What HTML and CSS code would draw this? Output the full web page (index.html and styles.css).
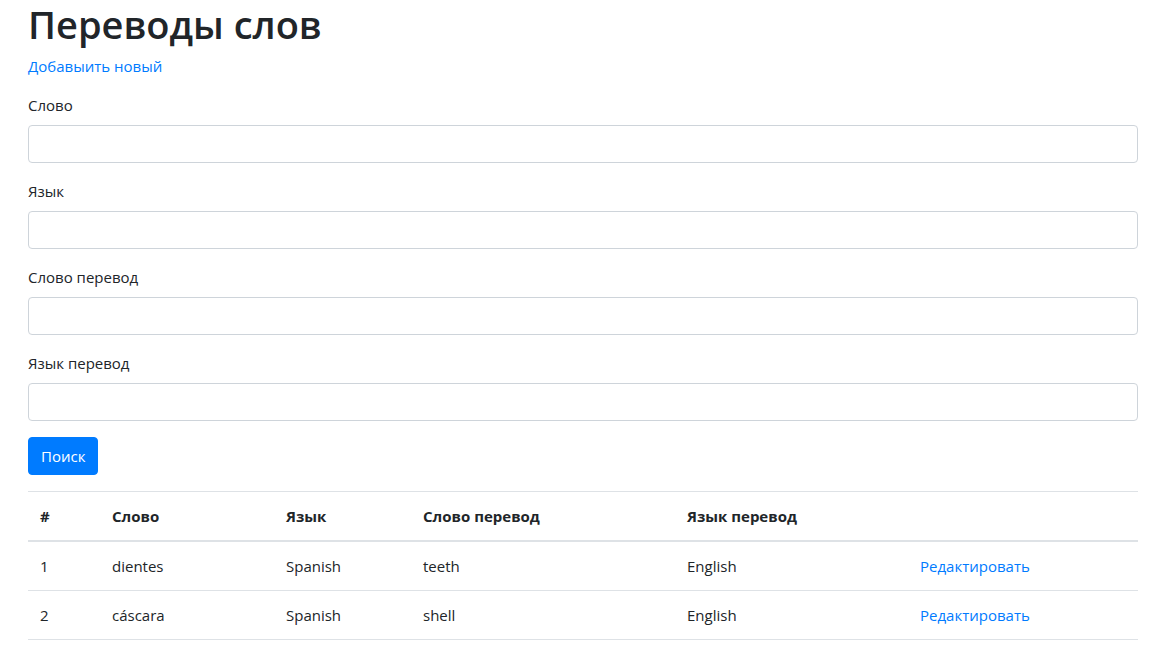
FILE: index.html
```html
<!DOCTYPE html>
<html lang="ru">
<head>
<meta charset="utf-8">
<title>Переводы слов</title>
<link rel="stylesheet" href="styles.css">
</head>
<body>
<div class="container">
  <h1 class="title">Переводы слов</h1>
  <p class="add"><a href="#" class="link">Добавыить новый</a></p>
  <form class="form">
    <div class="form-group">
      <label class="label">Слово</label>
      <input class="input" type="text">
    </div>
    <div class="form-group">
      <label class="label">Язык</label>
      <input class="input" type="text">
    </div>
    <div class="form-group">
      <label class="label">Слово перевод</label>
      <input class="input" type="text">
    </div>
    <div class="form-group">
      <label class="label">Язык перевод</label>
      <input class="input" type="text">
    </div>
    <button type="button" class="btn">Поиск</button>
  </form>
  <table class="table">
    <thead>
      <tr>
        <th class="c-num">#</th>
        <th class="c-word">Слово</th>
        <th class="c-lang">Язык</th>
        <th class="c-tword">Слово перевод</th>
        <th class="c-tlang">Язык перевод</th>
        <th class="c-act"></th>
      </tr>
    </thead>
    <tbody>
      <tr>
        <td>1</td>
        <td>dientes</td>
        <td>Spanish</td>
        <td>teeth</td>
        <td>English</td>
        <td><a href="#" class="link">Редактировать</a></td>
      </tr>
      <tr>
        <td>2</td>
        <td>cáscara</td>
        <td>Spanish</td>
        <td>shell</td>
        <td>English</td>
        <td><a href="#" class="link">Редактировать</a></td>
      </tr>
    </tbody>
  </table>
</div>
</body>
</html>
```
FILE: styles.css
```css
* { box-sizing: border-box; }
html, body { margin: 0; padding: 0; }
body {
  font-family: "Open Sans", "Noto Sans", "Liberation Sans", sans-serif;
  font-size: 15px;
  line-height: 24px;
  color: #212529;
  background: #fff;
}
.container {
  padding: 0 28px;
}
.title {
  font-size: 38px;
  font-weight: 600;
  line-height: 48px;
  margin: 0 0 6px;
}
.add {
  margin: 0 0 15px;
}
.link {
  color: #007bff;
  text-decoration: none;
}
.form-group {
  margin-bottom: 16px;
}
.label {
  display: block;
  margin-bottom: 8px;
}
.input {
  display: block;
  width: 100%;
  height: 38px;
  padding: 6px 12px;
  font: inherit;
  color: #495057;
  background: #fff;
  border: 1px solid #ced4da;
  border-radius: 4px;
}
.btn {
  display: block;
  height: 38px;
  padding: 6px 12px;
  font: inherit;
  color: #fff;
  background: #007bff;
  border: 1px solid #007bff;
  border-radius: 4px;
  margin-bottom: 16px;
}
.table {
  width: 100%;
  border-collapse: collapse;
}
.table th, .table td {
  padding: 12px;
  text-align: left;
  vertical-align: top;
  border-top: 1px solid #dee2e6;
}
.table th {
  font-weight: 700;
  border-bottom: 2px solid #dee2e6;
}
.table tbody tr:last-child td {
  border-bottom: 1px solid #dee2e6;
}
.c-num { width: 72px; }
.c-word { width: 174px; }
.c-lang { width: 137px; }
.c-tword { width: 264px; }
.c-tlang { width: 233px; }
```
